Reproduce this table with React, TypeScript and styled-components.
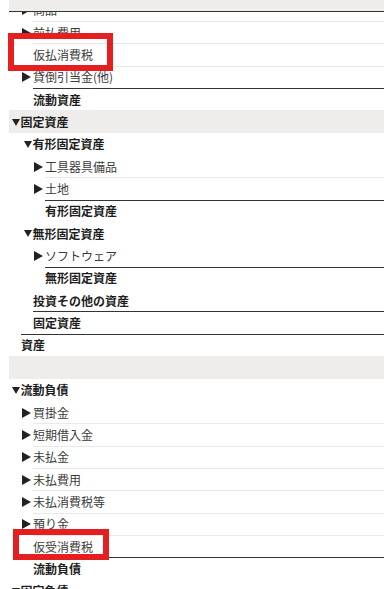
import React from "react";
import styled, { createGlobalStyle, css } from "styled-components";

type Rule = "none" | "light" | "dark";
type Marker = "open" | "closed" | "none";

interface Line {
	label?: string;
	depth: number;
	marker?: Marker;
	bold?: boolean;
	rule?: Rule;
	band?: boolean;
	note?: { left: number; top: number; width: number; height: number };
}

const ROW_H = 22.35;

// 貸借対照表の勘定科目ツリー（スクロール途中の表示）
const lines: Line[] = [
	{ label: "商品", depth: 1, marker: "closed" },
	{ label: "前払費用", depth: 1, marker: "closed", rule: "light" },
	{ label: "仮払消費税", depth: 1, rule: "light", note: { left: -1, top: -10.35, width: 105, height: 38 } },
	{ label: "貸倒引当金(他)", depth: 1, marker: "closed", rule: "light" },
	{ label: "流動資産", depth: 1, bold: true, rule: "dark" },
	{ label: "固定資産", depth: 0, marker: "open", bold: true, band: true },
	{ label: "有形固定資産", depth: 1, marker: "open", bold: true },
	{ label: "工具器具備品", depth: 2, marker: "closed" },
	{ label: "土地", depth: 2, marker: "closed", rule: "light" },
	{ label: "有形固定資産", depth: 2, bold: true, rule: "dark" },
	{ label: "無形固定資産", depth: 1, marker: "open", bold: true },
	{ label: "ソフトウェア", depth: 2, marker: "closed" },
	{ label: "無形固定資産", depth: 2, bold: true, rule: "dark" },
	{ label: "投資その他の資産", depth: 1, bold: true },
	{ label: "固定資産", depth: 1, bold: true, rule: "dark" },
	{ label: "資産", depth: 0, bold: true, rule: "dark" },
	{ depth: 0, band: true },
	{ label: "流動負債", depth: 0, marker: "open", bold: true },
	{ label: "買掛金", depth: 1, marker: "closed" },
	{ label: "短期借入金", depth: 1, marker: "closed", rule: "light" },
	{ label: "未払金", depth: 1, marker: "closed", rule: "light" },
	{ label: "未払費用", depth: 1, marker: "closed", rule: "light" },
	{ label: "未払消費税等", depth: 1, marker: "closed", rule: "light" },
	{ label: "預り金", depth: 1, marker: "closed", rule: "light" },
	{ label: "仮受消費税", depth: 1, rule: "light", note: { left: 4, top: -6, width: 96, height: 31 } },
	{ label: "流動負債", depth: 1, bold: true, rule: "dark" },
	{ label: "固定負債", depth: 0, marker: "open", bold: true },
];

export default function App() {
	return (
		<>
			<GlobalStyle />
			<Screen>
				<StickyBand />
				<Tree>
					{lines.map((line, i) => (
						<Row key={i} $band={line.band}>
							<Cell $depth={line.depth} $rule={line.rule ?? "none"}>
								{line.marker === "open" && <OpenMark />}
								{line.marker === "closed" && <ClosedMark />}
								{line.label && <Label $bold={line.bold}>{line.label}</Label>}
							</Cell>
							{line.note && <Highlight style={line.note} />}
						</Row>
					))}
				</Tree>
			</Screen>
		</>
	);
}

const GlobalStyle = createGlobalStyle`
  html, body {
    margin: 0;
    padding: 0;
    background: #ffffff;
  }
  body {
    font-family: "Noto Sans CJK JP", "Noto Sans", sans-serif;
    font-size: 12px;
    color: #333333;
  }
`;

const Screen = styled.div`
	position: relative;
	width: 384px;
	height: 589px;
	overflow: hidden;
	background: #ffffff;
`;

// 上端に固定された見出し帯（下に流れた行を覆う）
const StickyBand = styled.div`
	position: absolute;
	top: 0;
	left: 9px;
	right: 0;
	height: 11px;
	background: #eeedeb;
	border-bottom: 1px solid #333333;
	z-index: 2;
`;

const Tree = styled.div`
	display: flex;
	flex-direction: column;
	padding-left: 9px;
	margin-top: -1.35px;
`;

const Row = styled.div<{ $band?: boolean }>`
	position: relative;
	display: flex;
	height: ${ROW_H}px;
	background: ${(p) => (p.$band ? "#eeedeb" : "transparent")};
`;

const ruleColor: Record<Rule, string> = {
	none: "transparent",
	light: "#e9e9e9",
	dark: "#333333",
};

const Cell = styled.div<{ $depth: number; $rule: Rule }>`
	flex: 1;
	display: flex;
	align-items: center;
	box-sizing: border-box;
	margin-left: ${(p) => 12 + p.$depth * 12}px;
	border-top: 1px solid ${(p) => ruleColor[p.$rule]};
`;

const markBase = css`
	flex-shrink: 0;
	width: 0;
	height: 0;
	border-style: solid;
	border-color: transparent;
`;

// ▶ 折りたたみ
const ClosedMark = styled.span`
	${markBase};
	margin-left: -11px;
	margin-right: 2px;
	border-width: 5px 0 5px 9px;
	border-left-color: #222222;
`;

// ▼ 展開中
const OpenMark = styled.span`
	${markBase};
	margin-left: -9.5px;
	margin-right: 1.1px;
	border-width: 7px 4.2px 0 4.2px;
	border-top-color: #222222;
`;

const Label = styled.span<{ $bold?: boolean }>`
	font-size: 12px;
	line-height: 16px;
	white-space: nowrap;
	font-weight: ${(p) => (p.$bold ? 700 : 400)};
	color: ${(p) => (p.$bold ? "#1e1e1e" : "#3a3a3a")};
`;

// 赤枠の注記
const Highlight = styled.div`
	position: absolute;
	box-sizing: border-box;
	border: 6px solid #e51f1f;
	pointer-events: none;
	z-index: 3;
`;
